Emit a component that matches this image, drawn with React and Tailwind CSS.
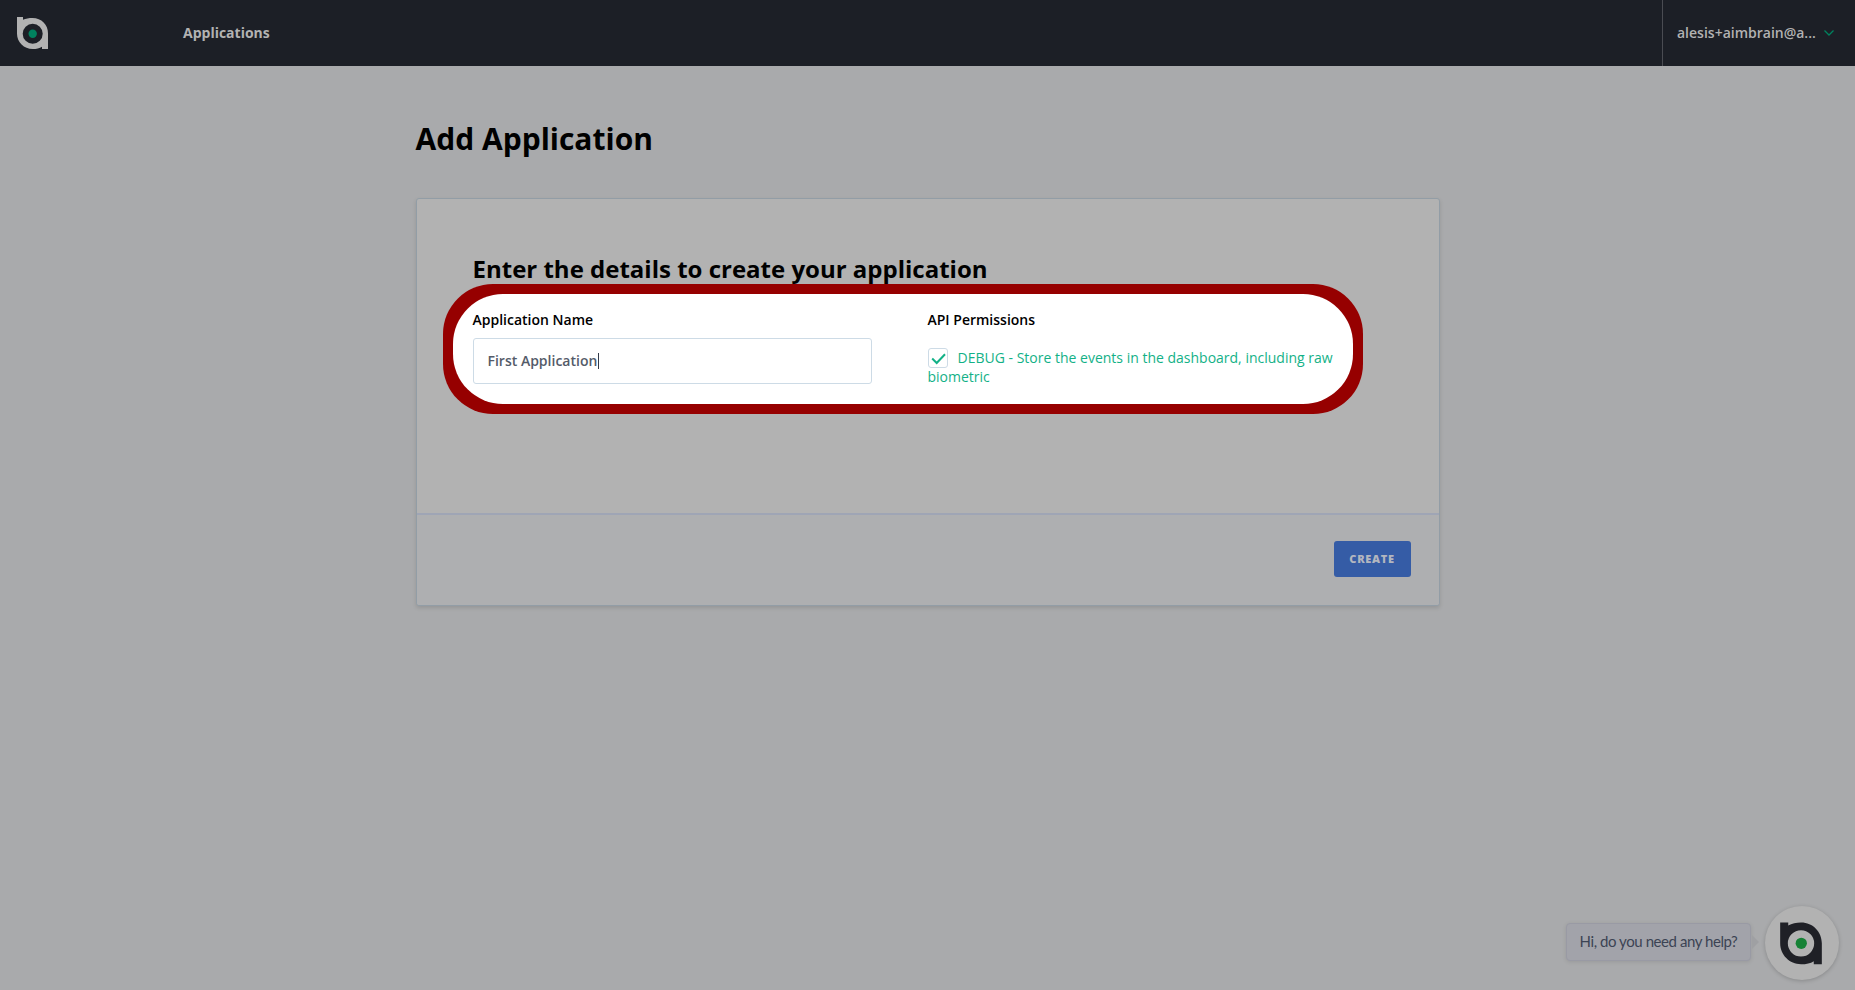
import React from "react";

const MARK_NAV =
  "M0 0H6V2.800C8.700 1.500 12 1 15.500 1C24.500 1 31 7.700 31 16.500V32H25V29.700C22.500 31.200 19.500 32 15.700 32C7 32 0 25.200 0 16.700ZM15.700 6.800A10 10 0 1 0 15.700 26.800A10 10 0 1 0 15.700 6.800Z";
const MARK_CHAT =
  "M0 0.300H6V2.600C8.700 1 12 0.300 15.500 0.300C24.500 0.300 31 7.300 31 15.900V31.500H25V29.200C22.500 30.800 19.500 31.500 15.500 31.500C7 31.500 0 24.600 0 15.900ZM15.500 6.100A9.800 9.800 0 1 0 15.500 25.700A9.800 9.800 0 1 0 15.500 6.100Z";

function Logo({ className, dot, mark, cy }) {
  return (
    <svg className={className} viewBox="0 0 31 32" fill="none">
      <path fill="currentColor" fillRule="evenodd" d={mark} />
      <circle cx="15.700" cy={cy} r="4.200" fill={dot} />
    </svg>
  );
}

function Header() {
  return (
    <header className="flex h-[66px] bg-[#1c1f26] text-sm font-semibold text-[#b2b2b2]">
      <div className="flex w-[183px] items-center pl-[17px]">
        <Logo className="h-8 w-[31px] text-[#b2b2b2]" dot="#00825e" mark={MARK_NAV} cy={16.8} />
      </div>
      <nav className="flex flex-1 items-center">
        <a className="font-bold">Applications</a>
      </nav>
      <div className="flex w-[193px] items-center border-l border-[#4a4c52] pl-[14px]">
        <span>alesis+aimbrain@a...</span>
        <svg className="ml-[7px] h-2 w-3" viewBox="0 0 12 8" fill="none">
          <path d="M1.500 1.500L6 6L10.500 1.500" stroke="#00825e" strokeWidth="1.300" />
        </svg>
      </div>
    </header>
  );
}

function Highlight() {
  return (
    <div className="absolute -left-[30px] top-[85px] h-[130px] w-[920px] rounded-[50px] bg-[#960000] p-[10px]">
      <div className="h-full w-full rounded-[50px] bg-white" />
    </div>
  );
}

export default function App() {
  return (
    <div className="flex h-[990px] w-[1855px] flex-col bg-[#a9aaac] font-['Open_Sans',sans-serif] text-black">
      <Header />
      <main className="mx-auto w-[1024px] pt-[52px]">
        <h1 className="h-[80px] text-[30px] leading-[42px] font-bold">Add Application</h1>
        <section className="h-[408px] rounded-[3px] border border-[#929da6] bg-[#b2b2b2] shadow-[0_2px_4px_rgba(0,0,0,0.12)]">
          <div className="h-[314px] px-14 pt-[53px]">
            <h2 className="text-2xl leading-[34px] font-bold">Enter the details to create your application</h2>
            <div className="relative flex pt-6">
              <div className="absolute left-0 -top-[87px]">
                <Highlight />
              </div>
              <div className="relative w-[455px]">
                <label className="block text-sm leading-5 font-semibold">Application Name</label>
                <div className="mt-2 flex h-[46px] w-[399px] items-center rounded-[3px] border border-[#cddbe6] bg-white pl-[14px] text-sm font-semibold text-[#545b69]">
                  <span>First Application</span>
                  <span className="ml-px h-4 w-px bg-[#333a49]" />
                </div>
              </div>
              <div className="relative w-[412px]">
                <div className="text-sm leading-5 font-semibold">API Permissions</div>
                <div className="mt-[18px] text-sm leading-[19px] text-[#13b187]">
                  <span className="-my-1 mr-[10px] inline-flex h-5 w-5 -translate-y-px items-center justify-center rounded-[3px] border border-[#cddbe6] align-middle">
                    <svg className="h-3 w-[15px] translate-x-px translate-y-px" viewBox="0 0 15 12" fill="none">
                      <path d="M1.200 5.500L5.700 10L14 1.200" stroke="currentColor" strokeWidth="2" />
                    </svg>
                  </span>
                  DEBUG - Store the events in the dashboard, including raw biometric
                </div>
              </div>
            </div>
          </div>
          <footer className="flex h-[92px] items-center justify-end rounded-b-[3px] border-t-2 border-[#9fa5b5] bg-[#aeafb1] pr-7 pb-[2px]">
            <button className="h-9 w-[77px] rounded-[3px] bg-[#355ca6] text-[11px] font-extrabold tracking-[0.7px] text-[#b2b6bf]">CREATE</button>
          </footer>
        </section>
      </main>
      <aside className="mt-auto flex items-center justify-end pr-4 pb-[10px]">
        <div className="-mt-[2px] flex h-[38px] w-[185px] items-center justify-center rounded-[4px] border border-[#999aa4] bg-[#a2a3aa] pb-[2px] font-['Lato',sans-serif] text-[15px] tracking-[-0.43px] whitespace-nowrap text-[#3c4354] shadow-[0_1px_4px_rgba(0,0,0,0.1)]">
          Hi, do you need any help?
        </div>
        <svg className="-mt-[2px] ml-px mr-[6px] h-[14px] w-[7px]" viewBox="0 0 7 14">
          <path d="M0 0L7 7L0 14Z" fill="#9fa0a3" />
        </svg>
        <div className="flex h-[74px] w-[74px] items-center justify-center rounded-full bg-[#b2b2b2] pr-[2px] shadow-[0_1px_4px_rgba(0,0,0,0.2)]">
          <Logo className="h-[43px] w-[42px] text-[#1f2026]" dot="#168236" mark={MARK_CHAT} cy={15.9} />
        </div>
      </aside>
    </div>
  );
}
